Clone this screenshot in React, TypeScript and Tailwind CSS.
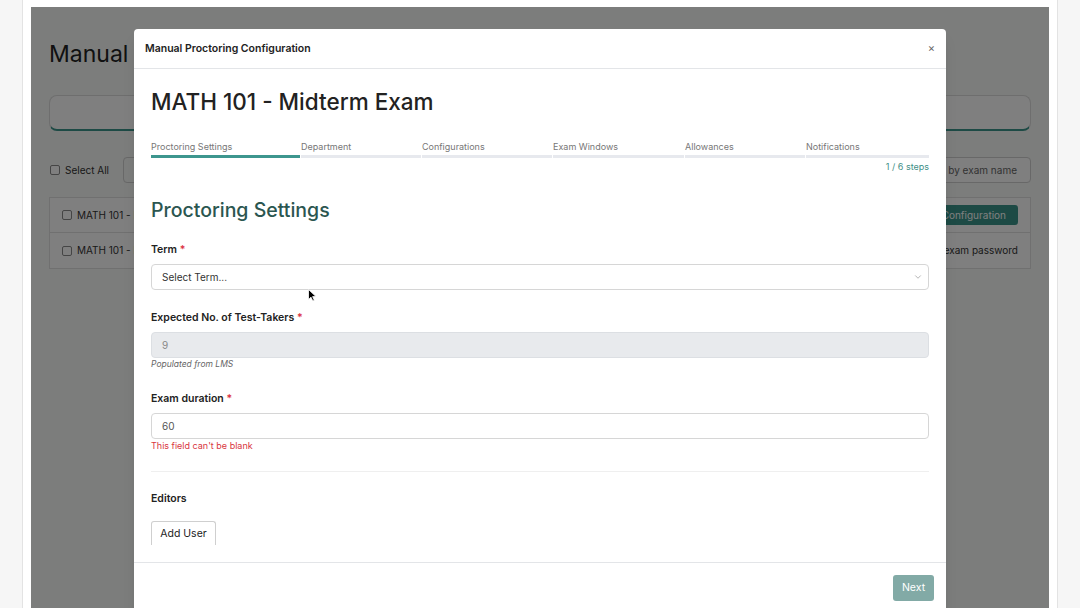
import { ChevronDown } from 'lucide-react'

const steps = [
  { label: 'Proctoring Settings', w: 'w-[149px]', active: true },
  { label: 'Department', w: 'w-[120px]', active: false },
  { label: 'Configurations', w: 'w-[130px]', active: false },
  { label: 'Exam Windows', w: 'w-[131px]', active: false },
  { label: 'Allowances', w: 'w-[120px]', active: false },
  { label: 'Notifications', w: 'flex-1', active: false },
]

function Checkbox() {
  return <span className="inline-block h-[10px] w-[10px] rounded-[2px] border border-[#8a8a8a] bg-white" />
}

function BackgroundPage() {
  return (
    <div className="px-[18px] pt-[32px]">
      <h1 className="text-[23px] leading-[30px] text-[#222]">Manual Proctoring</h1>
      <div className="mt-[26px] h-[36px] rounded-lg border border-[#dcdcdc] border-b-2 border-b-[#3a948a] bg-white" />
      <div className="mt-[26px] flex h-[26px] items-center">
        <div className="flex items-center gap-[5px] pl-[1px] text-[10px] text-[#333]">
          <Checkbox />
          <span>Select All</span>
        </div>
        <div className="ml-[14px] flex h-[26px] items-center rounded border border-[#d0d0d0] px-[10px] text-[10px] text-[#333]">
          Import
        </div>
        <div className="ml-auto flex h-[26px] w-[280px] items-center justify-end rounded border border-[#d0d0d0] bg-white pr-[13px] text-[10px] text-[#666]">
          Search by exam name
        </div>
      </div>
      <div className="mt-[14px] border border-[#e0e0e0] bg-white">
        <div className="flex h-[35px] items-center border-b border-[#e0e0e0] px-[12px] text-[10px] text-[#333]">
          <Checkbox />
          <span className="ml-[5px]">MATH 101 - Midterm Exam</span>
          <span className="ml-auto flex h-[20px] items-center rounded-[3px] bg-[#3a948a] px-[12px] text-white">
            Add Configuration
          </span>
        </div>
        <div className="flex h-[35px] items-center px-[12px] text-[10px] text-[#333]">
          <Checkbox />
          <span className="ml-[5px]">MATH 101 - Final Exam</span>
          <span className="ml-auto">Set exam password</span>
        </div>
      </div>
    </div>
  )
}

function Label({ text }: { text: string }) {
  return (
    <div className="text-[10.5px] font-semibold leading-[14px] text-[#222]">
      {text} <span className="text-[#dc3545]">*</span>
    </div>
  )
}

function Modal() {
  return (
    <div className="absolute left-[103px] top-[22px] w-[812px] rounded-[4px] bg-white shadow-lg">
      <div className="flex h-[40px] items-center justify-between border-b border-[#e3e5e8] pl-[11px] pr-[11px]">
        <span className="text-[10.5px] font-semibold text-[#222]">Manual Proctoring Configuration</span>
        <span className="text-[11px] leading-none text-[#666]">×</span>
      </div>
      <div className="px-[17px] pb-[17px] pt-[19px]">
        <h2 className="text-[22.5px] font-medium leading-[28px] text-[#222]">MATH 101 - Midterm Exam</h2>

        <div className="mt-[26px] flex gap-[1px]">
          {steps.map((s) => (
            <div key={s.label} className={s.w}>
              <div className="text-[9px] leading-[10px] text-[#777]">{s.label}</div>
              <div className={`mt-[3px] h-[3px] ${s.active ? 'bg-[#3d968e]' : 'bg-[#e7e9ee]'}`} />
            </div>
          ))}
        </div>
        <div className="mt-[3px] text-right text-[9px] leading-[12px] text-[#3f8f87]">1 / 6 steps</div>

        <h3 className="mt-[24px] text-[19.5px] font-medium leading-[26px] text-[#2b5650]">Proctoring Settings</h3>

        <div className="mt-[20px]">
          <Label text="Term" />
          <div className="mt-[7px] flex h-[26px] items-center justify-between rounded-[4px] border border-[#d6d6d6] pl-[10px] pr-[5px] text-[10px] text-[#333]">
            <span>Select Term...</span>
            <ChevronDown className="h-[10px] w-[10px] text-[#888]" strokeWidth={1.5} />
          </div>
        </div>

        <div className="mt-[21px]">
          <Label text="Expected No. of Test-Takers" />
          <div className="mt-[7px] flex h-[26px] items-center rounded-[4px] border border-[#dcdfe3] bg-[#e8eaed] pl-[10px] text-[10px] text-[#888]">
            9
          </div>
          <div className="mt-[1px] text-[8.5px] italic leading-[10px] text-[#666]">Populated from LMS</div>
        </div>

        <div className="mt-[23px]">
          <Label text="Exam duration" />
          <div className="mt-[7px] flex h-[26px] items-center rounded-[4px] border border-[#d6d6d6] pl-[10px] text-[10px] text-[#555]">
            60
          </div>
          <div className="mt-[2px] text-[9px] leading-[10px] text-[#d9363e]">This field can't be blank</div>
        </div>

        <div className="mt-[20px] h-[1px] bg-[#efefef]" />

        <div className="mt-[20px] text-[10.5px] font-semibold leading-[14px] text-[#222]">Editors</div>
        <div className="mt-[15px] flex h-[24px] w-[65px] items-center justify-center rounded-t-[3px] border-x border-t border-[#cfcfcf] text-[10.5px] text-[#222]">
          Add User
        </div>
      </div>
      <div className="flex justify-end border-t border-[#e3e5e8] pb-[13px] pr-[12px] pt-[12px]">
        <div className="flex h-[26px] w-[41px] items-center justify-center rounded-[3px] bg-[#82aaa6] text-[10.5px] text-white">
          Next
        </div>
      </div>
    </div>
  )
}

function Cursor() {
  return (
    <svg className="absolute left-[277px] top-[282px]" width="9" height="13" viewBox="0 0 9 13">
      <path d="M0.5 0.5 L0.5 10.5 L3 8.2 L4.8 12 L6.3 11.3 L4.6 7.6 L8 7.6 Z" fill="#000" stroke="#fff" strokeWidth="0.8" />
    </svg>
  )
}

export default function App() {
  return (
    <div className="relative flex h-[608px] w-[1080px] overflow-hidden bg-[#f6f6f6] font-[Inter,sans-serif]">
      <div className="w-[22px] shrink-0" />
      <div className="flex w-[1036px] shrink-0 flex-col border-x border-[#e3e3e3] bg-white px-2 pt-[7px]">
        <div className="relative flex-1 bg-[#f8faf8]">
          <BackgroundPage />
          <div className="absolute inset-0 bg-black/50" />
          <Modal />
          <Cursor />
        </div>
      </div>
    </div>
  )
}
